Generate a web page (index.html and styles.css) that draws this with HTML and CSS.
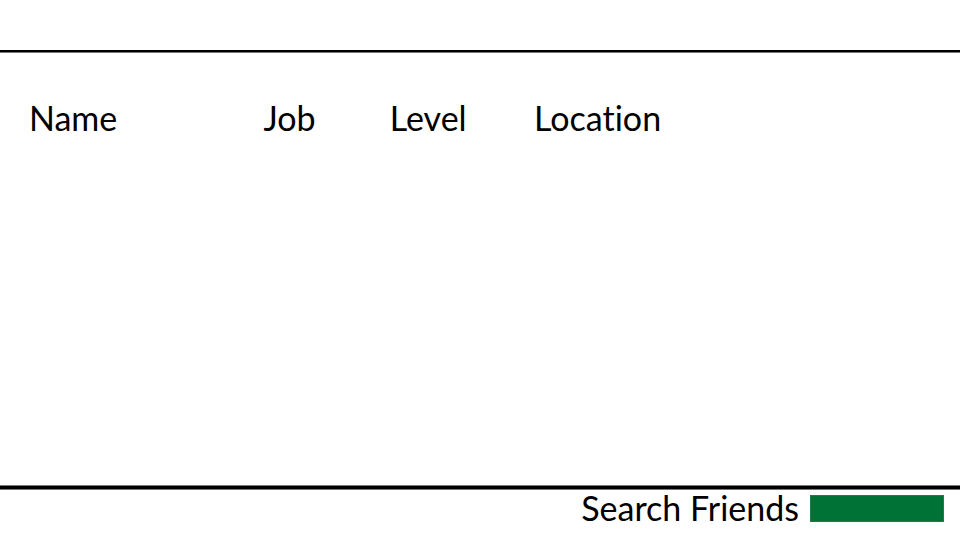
FILE: index.html
```html
<!DOCTYPE html>
<html lang="en">
<head>
<meta charset="utf-8">
<meta name="viewport" content="width=device-width, initial-scale=1">
<title>Friends</title>
<link rel="stylesheet" href="styles.css">
</head>
<body>
<main class="panel">
  <table class="friends">
    <thead>
      <tr>
        <th class="col-name" scope="col">Name</th>
        <th class="col-job" scope="col">Job</th>
        <th class="col-level" scope="col">Level</th>
        <th scope="col">Location</th>
      </tr>
    </thead>
    <tbody></tbody>
  </table>
</main>
<form class="search">
  <label for="search">Search Friends</label>
  <input id="search" class="search-box" type="text">
</form>
</body>
</html>
```
FILE: styles.css
```css
* {
  box-sizing: border-box;
}

body {
  display: flex;
  flex-direction: column;
  min-height: 100vh;
  margin: 0;
  padding-top: 50px;
  background: #fff;
  color: #000;
  font: 34px/38px Lato, "Noto Sans", sans-serif;
  font-variant-ligatures: none;
}

.panel {
  flex: 1;
  padding: 47px 29px;
  border-top: 2px solid #000;
  border-bottom: 3px solid #000;
  box-shadow: inset 0 1px #777, inset 0 -1px #777, 0 1px #777;
}

.friends {
  width: 100%;
  table-layout: fixed;
  border-collapse: collapse;
}

.friends th {
  padding: 0;
  font-weight: 400;
  text-align: left;
}

.col-name {
  width: 26%;
}

.col-job {
  width: 14%;
}

.col-level {
  width: 16%;
}

.search {
  display: flex;
  align-items: center;
  justify-content: flex-end;
  gap: 11px;
  padding: 0 16px 13px;
}

.search-box {
  width: 134px;
  height: 27px;
  padding: 0 6px;
  border: 1px solid #1a8049;
  border-radius: 0;
  background: #007236;
  color: #fff;
  font: 16px/24px Lato, sans-serif;
}
```
